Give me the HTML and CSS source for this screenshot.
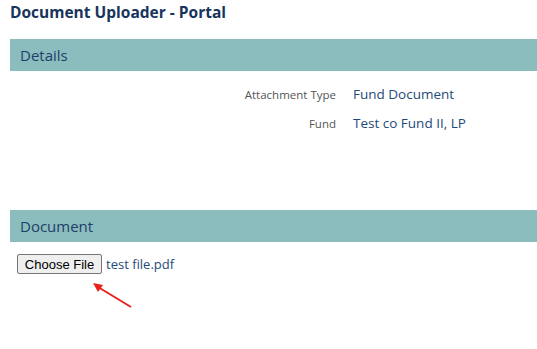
FILE: index.html
```html
<!DOCTYPE html>
<html lang="en">
<head>
    <meta charset="UTF-8">
    <title>Document Uploader - Portal</title>
    <link rel="stylesheet" href="styles.css">
</head>
<body>
    <div class="page">
        <h1 class="title">Document Uploader - Portal</h1>

        <div class="section">
            <div class="section-head">Details</div>
            <div class="details">
                <div class="label">Attachment Type</div>
                <div class="value">Fund Document</div>
                <div class="label">Fund</div>
                <div class="value">Test co Fund II, LP</div>
            </div>
        </div>

        <div class="section">
            <div class="section-head">Document</div>
            <div class="upload">
                <button class="file-btn">Choose File</button>
                <span class="file-name">test file.pdf</span>
                <svg class="arrow" width="50" height="34" viewBox="0 0 50 34">
                    <line x1="44" y1="28" x2="11" y2="8" stroke="#e8211e" stroke-width="2" />
                    <polygon points="6,4 16,6 11,13" fill="#e8211e" />
                </svg>
            </div>
        </div>
    </div>
</body>
</html>
```

FILE: styles.css
```css
body {
    margin: 0;
    font-family: 'Open Sans', 'Noto Sans', Arial, sans-serif;
    background: #fff;
    color: #1c3b63;
}
.page {
    padding: 0 0 0 10px;
}
.title {
    margin: 0;
    padding: 1px 0 0;
    height: 39px;
    box-sizing: border-box;
    font-size: 15.5px;
    font-weight: 700;
    color: #17345c;
}
.section-head {
    background-color: #8bbdbf;
    height: 32px;
    line-height: 32px;
    padding-left: 10px;
    font-size: 15px;
    color: #1e3f66;
}
.details {
    display: grid;
    grid-template-columns: 326px auto;
    grid-auto-rows: 18px;
    column-gap: 17px;
    row-gap: 11px;
    align-items: center;
    padding-top: 14px;
    height: 139px;
    box-sizing: border-box;
}
.label {
    text-align: right;
    font-size: 11.5px;
    color: #555;
}
.value {
    font-size: 13.5px;
    color: #1f4a7a;
}
.upload {
    position: relative;
    display: flex;
    align-items: flex-start;
    gap: 4px;
    padding: 12px 0 0 7px;
    height: 100px;
}
.file-btn {
    font-family: Arial, 'Liberation Sans', sans-serif;
    font-size: 13px;
    color: #000;
    background: #efefef;
    border: 1px solid #767676;
    border-radius: 2px;
    height: 20px;
    width: 85px;
    padding: 0;
}
.file-name {
    font-size: 13px;
    line-height: 20px;
    color: #1f4a7a;
}
.arrow {
    position: absolute;
    left: 77px;
    top: 37px;
}
```
